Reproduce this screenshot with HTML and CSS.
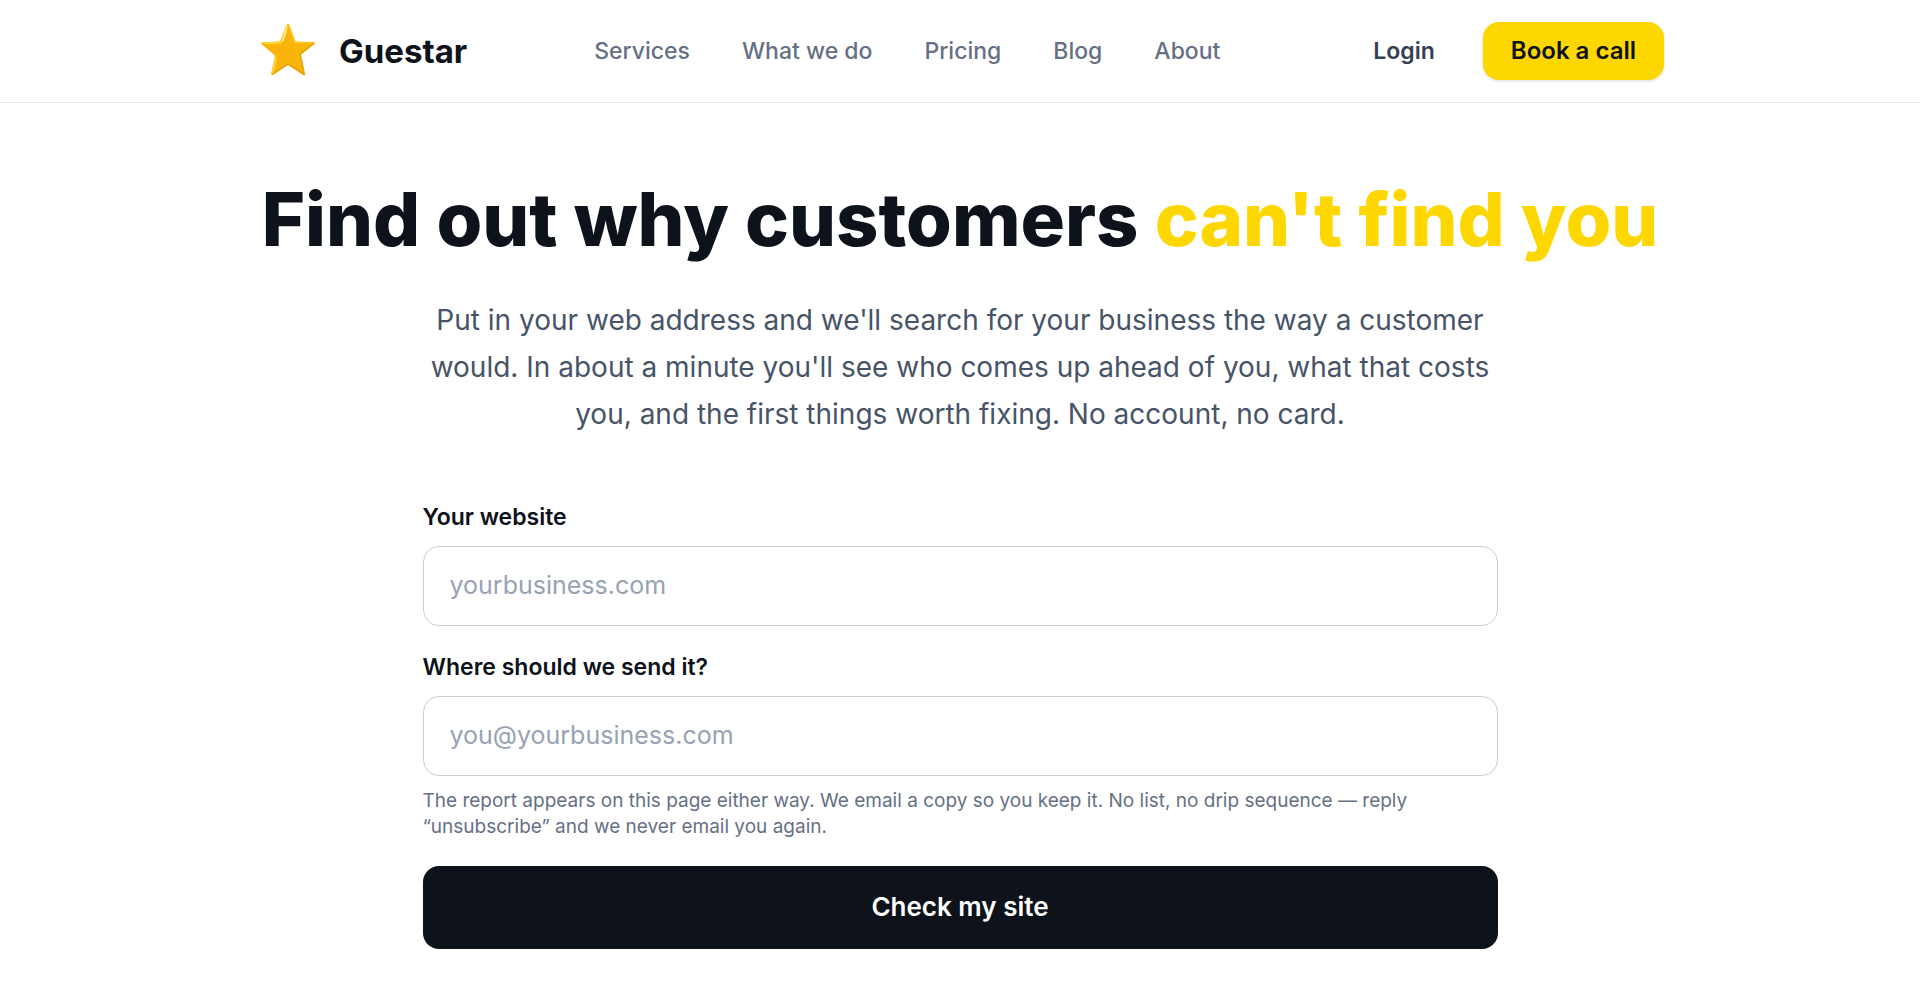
FILE: index.html
```
<!DOCTYPE html>
<html lang="en">
<head>
    <meta charset="UTF-8">
    <meta name="viewport" content="width=device-width, initial-scale=1.0">
    <title>Guestar</title>
    <link rel="stylesheet" href="styles.css">
</head>
<body>

<header class="site-header">
    <div class="header-inner">
        <a class="brand" href="#">
            <svg class="brand-star" viewBox="0 0 56 56" aria-hidden="true">
                <path d="M28 1c.8 0 1.300.6 1.600 1.500L35.500 18.500l18 .6c1.600.1 1.900 1.200.7 2.200L41 31.500l4 19.500c.3 1.300-.7 2-1.800 1.300L28 42 13 52c-1.100.7-2.200 0-1.800-1.400L15 32.500 1.800 21.500C.6 20.500 1 19.200 2.300 19.200l17.700-.7L26.400 2.500c.3-.9.8-1.500 1.600-1.500z" fill="#fbb40a"/>
                <path d="M27.500 2.500L21 19.500 3 20.200" fill="none" stroke="#fdd835" stroke-width="2" stroke-linejoin="round"/>
                <path d="M26.500 6l-3.500 12" fill="none" stroke="#fff0a0" stroke-width="1.500"/>
                <path d="M16 34l-3.500 16" fill="none" stroke="#fdd835" stroke-width="2"/>
                <path d="M29 3l6 16.500 17 .7" fill="none" stroke="#f9c92c" stroke-width="1.500"/>
                <path d="M53 21L40 31.500l4 19L28 41 13 51" fill="none" stroke="#e5a50a" stroke-width="1.500"/>
            </svg>
            <span>Guestar</span>
        </a>
        <nav class="main-nav">
            <a href="#">Services</a>
            <a href="#">What we do</a>
            <a href="#">Pricing</a>
            <a href="#">Blog</a>
            <a href="#">About</a>
        </nav>
        <div class="header-actions">
            <a class="login" href="#">Login</a>
            <button class="book" type="button">Book a call</button>
        </div>
    </div>
</header>

<main class="hero">
    <h1>Find out why customers <span class="highlight">can't find you</span></h1>
    <p class="intro">Put in your web address and we'll search for your business the way a customer would. In about a minute you'll see who comes up ahead of you, what that costs you, and the first things worth fixing. No account, no card.</p>

    <form class="check-form">
        <div class="field">
            <label for="website">Your website</label>
            <input type="text" id="website" placeholder="yourbusiness.com">
        </div>
        <div class="field">
            <label for="email">Where should we send it?</label>
            <input type="email" id="email" placeholder="you@yourbusiness.com">
            <p class="note">The report appears on this page either way. We email a copy so you keep it. No list, no drip sequence — reply “unsubscribe” and we never email you again.</p>
        </div>
        <button class="submit" type="submit">Check my site</button>
    </form>
</main>

</body>
</html>
```

FILE: styles.css
```
* {
    box-sizing: border-box;
}
body {
    margin: 0;
    font-family: Inter, "Liberation Sans", sans-serif;
    background-color: #fff;
    color: #0d121b;
}
a {
    color: inherit;
    text-decoration: none;
}
button {
    border: none;
    font-family: inherit;
    cursor: pointer;
}
.site-header {
    border-bottom: 1px solid #e4e7ec;
}
.header-inner {
    display: flex;
    align-items: center;
    justify-content: space-between;
    max-width: 1408px;
    margin: 0 auto;
    padding: 22px 0;
}
.brand {
    display: flex;
    align-items: center;
    gap: 23px;
    padding-left: 4px;
    font-size: 33px;
    font-weight: 700;
}
.brand-star {
    width: 56px;
    height: 56px;
}
.main-nav {
    display: flex;
    gap: 52px;
    color: #667085;
    font-size: 23px;
    font-weight: 500;
}
.header-actions {
    display: flex;
    align-items: center;
    gap: 48px;
    padding-left: 26px;
    font-size: 23px;
    font-weight: 600;
}
.login {
    color: #344054;
}
.book {
    padding: 16px 28px;
    border-radius: 16px;
    background-color: #ffd700;
    box-shadow: 0 1px 3px rgba(0, 0, 0, 0.15);
    color: #0d121b;
    font-size: 24px;
    font-weight: 600;
    line-height: 26px;
}
.hero {
    max-width: 1408px;
    margin: 0 auto;
    padding: 76px 0 60px;
    text-align: center;
}
h1 {
    margin: 0;
    font-size: 74px;
    font-weight: 800;
    line-height: 80px;
}
.highlight {
    color: #ffd700;
}
.intro {
    max-width: 1075px;
    margin: 38px auto 0;
    color: #475467;
    font-size: 28px;
    line-height: 47px;
}
.check-form {
    display: flex;
    flex-direction: column;
    gap: 26px;
    max-width: 1075px;
    margin: 64px auto 0;
    text-align: left;
}
label {
    display: block;
    margin-bottom: 14px;
    font-size: 23px;
    font-weight: 600;
    line-height: 30px;
}
input {
    display: block;
    width: 100%;
    height: 80px;
    padding: 0 26px 2px;
    border: 1px solid #c9ced8;
    border-radius: 16px;
    background-color: #fff;
    color: #0d121b;
    font-family: inherit;
    font-size: 25px;
}
input::placeholder {
    color: #98a2b3;
}
.note {
    margin: 12px 0 0;
    color: #667085;
    font-size: 19px;
    line-height: 26px;
}
.submit {
    height: 83px;
    padding-bottom: 3px;
    border-radius: 16px;
    background-color: #0d121b;
    color: #fff;
    font-size: 26px;
    font-weight: 600;
}
```
